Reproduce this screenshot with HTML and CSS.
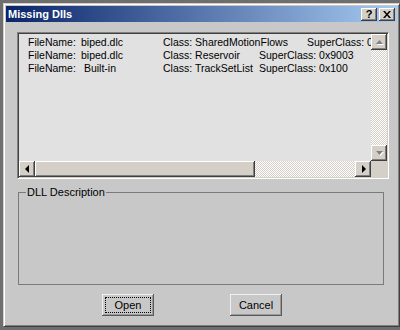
FILE: index.html
```html
<!DOCTYPE html>
<html lang="en">
<head>
    <meta charset="UTF-8">
    <title>Missing Dlls</title>
    <link rel="stylesheet" href="styles.css">
</head>
<body>
    <div class="dialog">
        <div class="titlebar">
            <span class="title">Missing Dlls</span>
            <div class="caption-buttons">
                <button class="cap-btn help">?</button>
                <button class="cap-btn close">
                    <svg width="8" height="7" viewBox="0 0 8 7"><path d="M0 0h2l2 2.5 2-2.5h2l-3 3.5 3 3.5h-2l-2-2.5-2 2.5h-2l3-3.5z" fill="#000"/></svg>
                </button>
            </div>
        </div>
        <div class="content">
            <div class="listbox">
                <div class="rows">
                    <div class="row"><span class="col-label">FileName:</span><span class="col-file">biped.dlc</span><span class="col-class">Class: SharedMotionFlows	SuperClass: 0x9003</span></div>
                    <div class="row"><span class="col-label">FileName:</span><span class="col-file">biped.dlc</span><span class="col-class">Class: Reservoir	SuperClass: 0x9003</span></div>
                    <div class="row"><span class="col-label">FileName:</span><span class="col-file"> Built-in</span><span class="col-class">Class: TrackSetList	SuperClass: 0x100</span></div>
                </div>
                <div class="vscroll">
                    <div class="sb-btn">
                        <svg width="9" height="6" viewBox="0 0 9 6"><path d="M1 5h7l-3.5-4z" fill="#fff" transform="translate(1 1)"/><path d="M1 5h7l-3.5-4z" fill="#808080"/></svg>
                    </div>
                    <div class="sb-track"></div>
                    <div class="sb-btn">
                        <svg width="9" height="6" viewBox="0 0 9 6"><path d="M1 1h7l-3.5 4z" fill="#fff" transform="translate(1 1)"/><path d="M1 1h7l-3.5 4z" fill="#808080"/></svg>
                    </div>
                </div>
                <div class="hscroll">
                    <div class="sb-btn">
                        <svg width="5" height="8" viewBox="0 0 5 8"><path d="M4 0v8l-4-4z" fill="#000"/></svg>
                    </div>
                    <div class="sb-thumb"></div>
                    <div class="sb-track"></div>
                    <div class="sb-btn">
                        <svg width="5" height="8" viewBox="0 0 5 8"><path d="M1 0v8l4-4z" fill="#000"/></svg>
                    </div>
                </div>
                <div class="corner"></div>
            </div>

            <fieldset class="group">
                <legend>DLL Description</legend>
            </fieldset>

            <div class="actions">
                <button class="btn default"><span>Open</span></button>
                <button class="btn"><span>Cancel</span></button>
            </div>
        </div>
    </div>
</body>
</html>
```
FILE: styles.css
```css
html, body {
    margin: 0;
    height: 100%;
}

body {
    background-color: #6e6e6e;
    padding: 3px 0 0 3px;
    box-sizing: border-box;
    font-family: "Liberation Sans", Arial, sans-serif;
    font-size: 11px;
    overflow: hidden;
}

.dialog {
    width: 397px;
    height: 324px;
    box-sizing: border-box;
    padding: 2px;
    background-color: #c8c8c8;
    border: 1px solid #d4d0c8;
    border-right-color: #404040;
    border-bottom-color: #404040;
    box-shadow: inset 1px 1px #fff, inset -1px -1px #808080;
    display: flex;
    flex-direction: column;
}

/* title bar */
.titlebar {
    height: 16px;
    display: flex;
    align-items: center;
    justify-content: space-between;
    background: linear-gradient(to right, #0a246a, #a6caf0);
    padding-left: 2px;
}

.title {
    color: #fff;
    font-weight: bold;
    font-size: 11px;
}

.caption-buttons {
    display: flex;
    gap: 2px;
    margin-right: 2px;
}

.cap-btn {
    width: 16px;
    height: 13px;
    padding: 0;
    border: none;
    background-color: #d4d0c8;
    box-shadow: inset -1px -1px #404040, inset 1px 1px #fff, inset -2px -2px #808080;
    display: flex;
    align-items: center;
    justify-content: center;
    font-family: "Liberation Sans", Arial, sans-serif;
    font-weight: bold;
    font-size: 11px;
    line-height: 1;
    color: #000;
}

/* main area */
.content {
    flex: 1;
    padding: 10px 0 0 11px;
}

.listbox {
    width: 372px;
    height: 147px;
    box-sizing: border-box;
    border: 1px solid #808080;
    border-right-color: #fff;
    border-bottom-color: #fff;
    box-shadow: inset 1px 1px #404040, inset -1px -1px #d4d0c8;
    padding: 1px;
    background-color: #e1e1e1;
    display: grid;
    grid-template-columns: 352px 16px;
    grid-template-rows: 127px 16px;
}

.rows {
    overflow: hidden;
    padding: 2px 0 0 9px;
    font-size: 10.5px;
    line-height: 13px;
    color: #000;
}

.row {
    white-space: nowrap;
}

.col-label {
    display: inline-block;
    width: 53px;
}

.col-file {
    display: inline-block;
    width: 82px;
    white-space: pre;
}

.col-class {
    display: inline-block;
    white-space: pre;
    tab-size: 48px;
}

/* scrollbars */
.vscroll {
    display: flex;
    flex-direction: column;
}

.hscroll {
    display: flex;
}

.sb-btn {
    width: 16px;
    height: 16px;
    flex: none;
    box-sizing: border-box;
    background-color: #d4d0c8;
    box-shadow: inset -1px -1px #404040, inset 1px 1px #fff, inset -2px -2px #808080;
    display: flex;
    align-items: center;
    justify-content: center;
}

.sb-track {
    flex: 1;
    background: repeating-conic-gradient(#fff 0 25%, #d4d0c8 0 50%) 0 0 / 2px 2px;
}

.sb-thumb {
    width: 220px;
    background-color: #d4d0c8;
    box-shadow: inset -1px -1px #404040, inset 1px 1px #fff, inset -2px -2px #808080;
}

.corner {
    background-color: #d4d0c8;
}

/* group box */
.group {
    width: 366px;
    height: 99px;
    box-sizing: border-box;
    margin: 7px 0 0 1px;
    padding: 0;
    border: 1px solid #7a7a7a;
}

.group legend {
    margin-left: 7px;
    padding: 0 1px;
    font-size: 11px;
    line-height: 13px;
    color: #000;
}

/* buttons */
.actions {
    display: flex;
    gap: 76px;
    margin: 9px 0 0 85px;
}

.btn {
    width: 52px;
    height: 22px;
    padding: 3px;
    border: none;
    background-color: #c8c8c8;
    box-shadow: inset -1px -1px #5a5a5a, inset 1px 1px #f0f0f0, inset -2px -2px #9a9a9a;
    font-family: "Liberation Sans", Arial, sans-serif;
    font-size: 11px;
    color: #000;
}

.btn span {
    display: flex;
    align-items: center;
    justify-content: center;
    height: 100%;
    box-sizing: border-box;
    border: 1px dotted transparent;
}

.btn.default span {
    border-color: #000;
}
```
